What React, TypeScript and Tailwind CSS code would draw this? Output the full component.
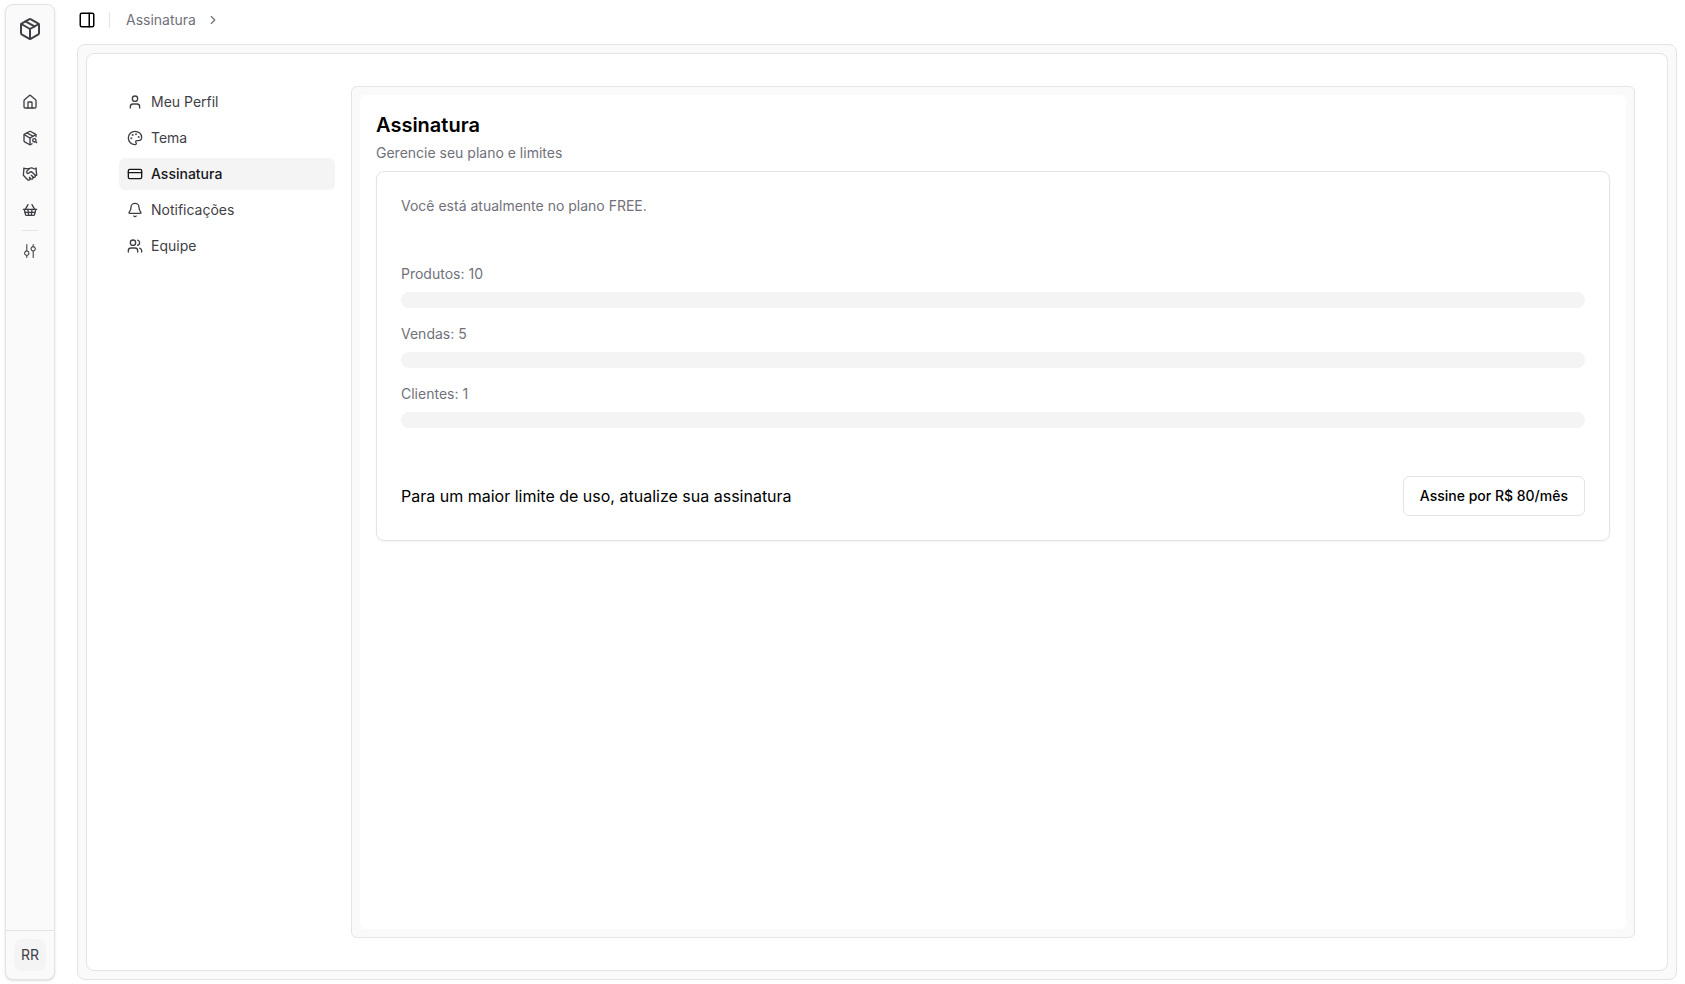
import {
  Bell,
  ChevronRight,
  CreditCard,
  Handshake,
  House,
  Package,
  PackageSearch,
  Palette,
  PanelRight,
  ShoppingBasket,
  User,
  Users,
} from 'lucide-react';
import { RxMixerVertical } from 'react-icons/rx';

const mainLinks = [
  { label: 'Início', href: '#inicio', icon: House },
  { label: 'Produtos', href: '#produtos', icon: PackageSearch },
  { label: 'Clientes', href: '#clientes', icon: Handshake },
  { label: 'Vendas', href: '#vendas', icon: ShoppingBasket },
];

const settingsLinks = [
  { label: 'Meu Perfil', href: '#perfil', icon: User },
  { label: 'Tema', href: '#tema', icon: Palette },
  { label: 'Assinatura', href: '#assinatura', icon: CreditCard, active: true },
  { label: 'Notificações', href: '#notificacoes', icon: Bell },
  { label: 'Equipe', href: '#equipe', icon: Users },
];

const limits = [
  { label: 'Produtos', max: 10, used: 0 },
  { label: 'Vendas', max: 5, used: 0 },
  { label: 'Clientes', max: 1, used: 0 },
];

function AppSidebar() {
  return (
    <aside className="flex w-[50px] shrink-0 flex-col rounded-lg border border-[#e4e4e7] bg-[#fafafa] text-[#3f3f46] shadow">
      <a
        href="#inicio"
        aria-label="Página inicial"
        className="flex h-12 items-center justify-center"
      >
        <Package className="size-6" />
      </a>
      <nav className="flex flex-1 flex-col items-center gap-1 pt-[33px]">
        {mainLinks.map(({ label, href, icon: Icon }) => (
          <a
            key={label}
            href={href}
            aria-label={label}
            className="flex size-8 items-center justify-center rounded-md hover:bg-[#f4f4f5]"
          >
            <Icon className="size-4" />
          </a>
        ))}
        <div className="h-px w-4 bg-[#e4e4e7]" />
        <a
          href="#configuracoes"
          aria-label="Configurações"
          className="flex size-8 items-center justify-center rounded-md hover:bg-[#f4f4f5]"
        >
          <RxMixerVertical className="size-4" />
        </a>
      </nav>
      <div className="flex justify-center border-t border-[#e4e4e7] py-2">
        <button
          type="button"
          className="size-8 rounded-lg bg-[#f4f4f4] text-sm cursor-pointer"
        >
          RR
        </button>
      </div>
    </aside>
  );
}

function Header() {
  return (
    <header className="flex h-8 items-center">
      <button
        type="button"
        aria-label="Alternar menu"
        className="flex size-7 items-center justify-center rounded-md cursor-pointer"
      >
        <PanelRight className="size-[18px]" />
      </button>
      <div className="ml-2 mr-4 h-4 w-px bg-[#e4e4e7]" />
      <nav className="flex items-center gap-2.5 text-sm text-[#71717a]">
        <a href="#assinatura">Assinatura</a>
        <ChevronRight className="size-3.5" />
      </nav>
    </header>
  );
}

function SettingsNav() {
  return (
    <nav className="flex w-[216px] shrink-0 flex-col gap-1 text-sm">
      {settingsLinks.map(({ label, href, icon: Icon, active }) => (
        <a
          key={label}
          href={href}
          className={
            active
              ? 'flex h-8 items-center gap-2 rounded-md bg-[#f4f4f4] px-2 font-medium text-[#18181b]'
              : 'flex h-8 items-center gap-2 rounded-md px-2 text-[#3f3f46]'
          }
        >
          <Icon className="size-4" />
          {label}
        </a>
      ))}
    </nav>
  );
}

function LimitBar(props: { label: string; max: number; used: number }) {
  const { label, max, used } = props;

  return (
    <div className="flex flex-col gap-2">
      <p>
        {label}: {max}
      </p>
      <div
        role="progressbar"
        aria-label={label}
        aria-valuenow={used}
        aria-valuemax={max}
        className="h-4 w-full overflow-hidden rounded-full bg-[#f4f4f4]"
      >
        <div
          className="h-full bg-[#18181b]"
          style={{ width: `${(used / max) * 100}%` }}
        />
      </div>
    </div>
  );
}

function SubscriptionPanel() {
  return (
    <section className="flex min-w-0 flex-1 rounded-md border border-[#e4e4e7] bg-[#fafafa] p-2">
      <div className="flex-1 rounded-md bg-white p-4">
        <h1 className="text-xl font-semibold">Assinatura</h1>
        <p className="mt-1 text-sm text-[#71717a]">
          Gerencie seu plano e limites
        </p>
        <div className="mt-2 flex flex-col gap-12 rounded-lg border border-[#e4e4e7] p-6 shadow-xs">
          <p className="text-sm text-[#71717a]">
            Você está atualmente no plano FREE.
          </p>
          <div className="flex flex-col gap-4 text-sm text-[#71717a]">
            {limits.map((limit) => (
              <LimitBar key={limit.label} {...limit} />
            ))}
          </div>
          <div className="flex items-center justify-between">
            <p>Para um maior limite de uso, atualize sua assinatura</p>
            <button
              type="button"
              className="h-10 rounded-md border border-[#e4e4e7] bg-white px-4 text-sm font-medium cursor-pointer"
            >
              Assine por R$ 80/mês
            </button>
          </div>
        </div>
      </div>
    </section>
  );
}

function App() {
  return (
    <div className="flex min-h-screen gap-[18px] bg-white py-1 pl-[5px] pr-1 font-['Inter',sans-serif] text-black">
      <AppSidebar />
      <div className="flex min-w-0 flex-1 flex-col">
        <Header />
        <main className="mx-1 mt-2 flex flex-1 rounded-lg border border-[#e4e4e7] bg-[#fafafa] p-2">
          <div className="flex min-w-0 flex-1 gap-4 rounded-lg border border-[#e4e4e7] bg-white p-8">
            <SettingsNav />
            <SubscriptionPanel />
          </div>
        </main>
      </div>
    </div>
  );
}

export default App;
